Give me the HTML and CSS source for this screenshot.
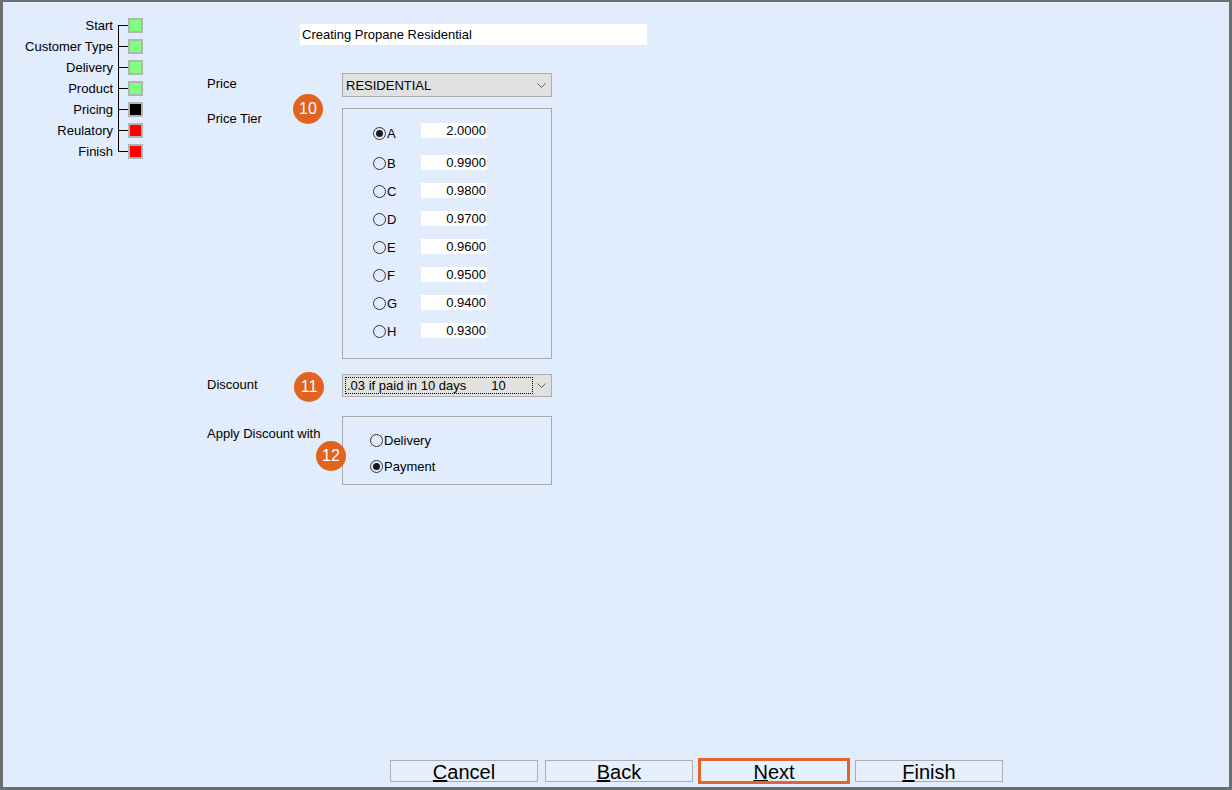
FILE: index.html
```html
<!DOCTYPE html>
<html lang="en">
<head>
  <meta charset="UTF-8">
  <title>Customer Wizard - Pricing</title>
  <link rel="stylesheet" href="styles.css">
</head>
<body>
  <div class="window">
    <div class="main">
      <ul class="steps">
        <li class="step first"><span class="step-name">Start</span><span class="link"></span><span class="box done"></span></li>
        <li class="step"><span class="step-name">Customer Type</span><span class="link"></span><span class="box done"></span></li>
        <li class="step"><span class="step-name">Delivery</span><span class="link"></span><span class="box done"></span></li>
        <li class="step"><span class="step-name">Product</span><span class="link"></span><span class="box done"></span></li>
        <li class="step"><span class="step-name">Pricing</span><span class="link"></span><span class="box current"></span></li>
        <li class="step"><span class="step-name">Reulatory</span><span class="link"></span><span class="box todo"></span></li>
        <li class="step last"><span class="step-name">Finish</span><span class="link"></span><span class="box todo"></span></li>
      </ul>

      <div class="form">
        <div class="title-field">Creating Propane Residential</div>

        <div class="row row-price">
          <div class="label">Price</div>
          <div class="combo">
            <span class="combo-text">RESIDENTIAL</span>
            <svg class="chevron" width="9" height="5" viewBox="0 0 9 5"><polyline points="0.5,0.5 4.5,4.5 8.5,0.5" fill="none" stroke="#606060" stroke-width="1"/></svg>
          </div>
        </div>

        <div class="row row-tier">
          <div class="label">Price Tier<span class="badge badge-10">10</span></div>
          <div class="group tier">
            <div class="tier-row first"><span class="radio checked"></span><span class="letter">A</span><span class="value">2.0000</span></div>
            <div class="tier-row"><span class="radio"></span><span class="letter">B</span><span class="value">0.9900</span></div>
            <div class="tier-row"><span class="radio"></span><span class="letter">C</span><span class="value">0.9800</span></div>
            <div class="tier-row"><span class="radio"></span><span class="letter">D</span><span class="value">0.9700</span></div>
            <div class="tier-row"><span class="radio"></span><span class="letter">E</span><span class="value">0.9600</span></div>
            <div class="tier-row"><span class="radio"></span><span class="letter">F</span><span class="value">0.9500</span></div>
            <div class="tier-row"><span class="radio"></span><span class="letter">G</span><span class="value">0.9400</span></div>
            <div class="tier-row"><span class="radio"></span><span class="letter">H</span><span class="value">0.9300</span></div>
          </div>
        </div>

        <div class="row row-discount">
          <div class="label">Discount<span class="badge badge-11">11</span></div>
          <div class="combo combo-small">
            <span class="focus"><span>.03 if paid in 10 days</span><span class="days">10</span></span>
            <svg class="chevron" width="9" height="5" viewBox="0 0 9 5"><polyline points="0.5,0.5 4.5,4.5 8.5,0.5" fill="none" stroke="#606060" stroke-width="1"/></svg>
          </div>
        </div>

        <div class="row row-apply">
          <div class="label">Apply Discount with<span class="badge badge-12">12</span></div>
          <div class="group apply">
            <div class="apply-row"><span class="radio"></span><span>Delivery</span></div>
            <div class="apply-row"><span class="radio checked"></span><span>Payment</span></div>
          </div>
        </div>
      </div>
    </div>

    <div class="footer">
      <button class="btn"><u>C</u>ancel</button>
      <button class="btn"><u>B</u>ack</button>
      <button class="btn btn-next"><u>N</u>ext</button>
      <button class="btn"><u>F</u>inish</button>
    </div>
  </div>
</body>
</html>
```

FILE: styles.css
```css
body {
  margin: 0;
  font-family: 'Liberation Sans', Arial, sans-serif;
  font-size: 13px;
  color: #000;
}

.window {
  width: 1232px;
  height: 790px;
  box-sizing: border-box;
  border-style: solid;
  border-color: #6e6e6e;
  border-width: 2px 3px 3px 3px;
  background: #e1ecfd;
  display: flex;
  flex-direction: column;
}

.main {
  flex: 1;
  display: flex;
}

/* wizard steps */
.steps {
  list-style: none;
  margin: 0;
  padding: 13px 0 0 0;
  width: 150px;
}

.step {
  display: flex;
  align-items: center;
  height: 21px;
}

.step-name {
  width: 110px;
  text-align: right;
  line-height: 15px;
}

.link {
  width: 10px;
  height: 21px;
  margin-left: 5px;
  background:
    linear-gradient(#000, #000) left center / 1px 100% no-repeat,
    linear-gradient(#000, #000) left center / 100% 1px no-repeat;
}

.step.first .link {
  background:
    linear-gradient(#000, #000) left bottom / 1px 50% no-repeat,
    linear-gradient(#000, #000) left center / 100% 1px no-repeat;
}

.step.last .link {
  background:
    linear-gradient(#000, #000) left top / 1px 11px no-repeat,
    linear-gradient(#000, #000) left center / 100% 1px no-repeat;
}

.box {
  width: 11px;
  height: 11px;
  border: 2px solid #b4b4b4;
}

.box.done { background: #80ff80; }
.box.current { background: #000; }
.box.todo { background: #ff0000; }

/* form */
.form {
  margin-left: 54px;
  padding-top: 22px;
}

.title-field {
  margin-left: 93px;
  width: 345px;
  height: 21px;
  line-height: 21px;
  padding-left: 2px;
  background: #fff;
}

.row {
  display: grid;
  grid-template-columns: 135px 210px;
}

.label {
  position: relative;
  line-height: 15px;
}

.row-price { margin-top: 28px; }
.row-price .label { padding-top: 3px; }

.row-tier { margin-top: 11px; }
.row-tier .label { padding-top: 3px; }

.row-discount { margin-top: 15px; }
.row-discount .label { padding-top: 3px; }

.row-apply { margin-top: 19px; }
.row-apply .label { padding-top: 10px; }

.badge {
  position: absolute;
  width: 30px;
  height: 30px;
  border-radius: 50%;
  background: #e2621f;
  color: #fff;
  font-size: 16px;
  line-height: 30px;
  text-align: center;
}

.badge-10 { left: 86px; top: -14px; }
.badge-11 { left: 87px; top: -2px; }
.badge-12 { left: 109px; top: 25px; }

.combo {
  height: 22px;
  border: 1px solid #adadad;
  background: #e1e1e1;
  display: flex;
  align-items: center;
  justify-content: space-between;
  padding: 0 5px 0 3px;
}

.combo-small {
  height: 21px;
  padding-left: 2px;
}

.chevron {
  display: block;
}

.focus {
  display: flex;
  box-sizing: border-box;
  width: 188px;
  height: 17px;
  line-height: 15px;
  padding-left: 1px;
  border: 1px dotted #000;
}

.days {
  margin-left: 25px;
}

.group {
  border: 1px solid #a9a9a9;
}

.tier {
  padding: 9px 0 14px 30px;
}

.tier-row {
  display: flex;
  align-items: center;
  height: 28px;
}

.tier-row.first {
  margin-bottom: 2px;
}

.tier-row.first .value {
  margin-bottom: 4px;
}

.tier-row .radio,
.tier-row .letter {
  margin-top: 2px;
}

.radio {
  width: 11px;
  height: 11px;
  border: 1px solid #333;
  border-radius: 50%;
  display: flex;
  align-items: center;
  justify-content: center;
  flex-shrink: 0;
}

.radio.checked::after {
  content: "";
  width: 7px;
  height: 7px;
  border-radius: 50%;
  background: #1a1a1a;
}

.letter {
  width: 34px;
  margin-left: 1px;
}

.value {
  width: 65px;
  height: 15px;
  line-height: 15px;
  padding-right: 1px;
  background: #fff;
  text-align: right;
}

.apply {
  padding: 10px 0 5px 27px;
}

.apply-row {
  display: flex;
  align-items: center;
  height: 26px;
  gap: 1px;
}

/* buttons */
.footer {
  display: flex;
  gap: 7px;
  padding: 0 0 5px 387px;
}

.btn {
  width: 148px;
  height: 22px;
  padding: 0;
  border: 1px solid #adadad;
  background: #e6effc;
  font-family: 'Liberation Sans', Arial, sans-serif;
  font-size: 20px;
  line-height: 22px;
  color: #000;
}

.btn-next {
  outline: 3px solid #e0662a;
  outline-offset: -1px;
}
```
